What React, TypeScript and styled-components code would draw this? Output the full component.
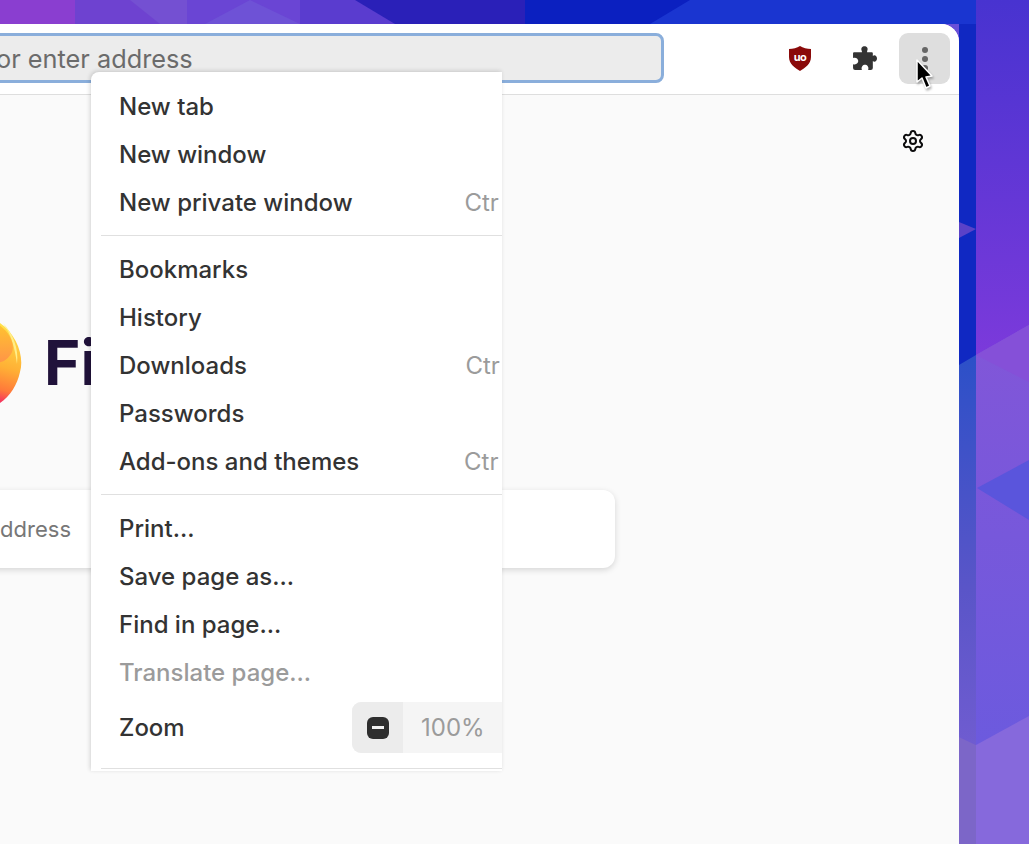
import React from "react";
import styled, { createGlobalStyle } from "styled-components";
import { Settings } from "lucide-react";

const GlobalStyle = createGlobalStyle`
  html, body {
    margin: 0;
    padding: 0;
    height: 100%;
    overflow: hidden;
    font-family: Inter, "Noto Sans", sans-serif;
  }
`;

const Desktop = styled.div`
  position: relative;
  width: 1029px;
  height: 844px;
  overflow: hidden;
  padding: 24px 70px 0 0;
  box-sizing: border-box;
  background: #6a50d8;
`;

const Wallpaper = styled.svg`
  position: absolute;
  inset: 0;
`;

const BrowserWindow = styled.div`
  position: relative;
  height: 820px;
  display: flex;
  flex-direction: column;
  background: #fafafa;
  border-radius: 0 18px 0 0;
  overflow: hidden;
`;

const Toolbar = styled.header`
  flex: none;
  height: 70px;
  display: flex;
  align-items: flex-start;
  background: #fff;
  border-bottom: 1px solid #dedede;
`;

const AddressBar = styled.div`
  flex: none;
  box-sizing: border-box;
  width: 964px;
  height: 50px;
  margin: 9px 0 0 -300px;
  padding-left: 202px;
  display: flex;
  align-items: center;
  background: #ececec;
  border: 3px solid #8aaedb;
  border-radius: 8px;
  color: #6b6b6b;
  font-size: 25.3px;
  white-space: nowrap;
`;

const ToolIcons = styled.div`
  flex: 1;
  height: 51px;
  margin-top: 9px;
  padding-right: 9px;
  display: flex;
  align-items: center;
  justify-content: flex-end;
`;

const ToolSlot = styled.div`
  width: 51px;
  height: 51px;
  margin-left: 14px;
  display: flex;
  align-items: center;
  justify-content: center;
  color: #333;
`;

const MenuButton = styled(ToolSlot)`
  margin-left: 9px;
  flex-direction: column;
  gap: 3px;
  background: #dedede;
  border-radius: 9px;
`;

const Dot = styled.span`
  width: 6px;
  height: 6px;
  border-radius: 50%;
  background: #666;
`;

const Pointer = styled.svg`
  position: absolute;
  left: 914px;
  top: 58px;
  filter: drop-shadow(1px 2px 1px rgba(0, 0, 0, 0.3));
`;

const Page = styled.main`
  flex: 1;
  display: flex;
  flex-direction: column;
`;

const GearRow = styled.div`
  display: flex;
  justify-content: flex-end;
  padding: 34px 34px 0 0;
  height: 24px;
  color: #0c0c0d;
`;

const Hero = styled.div`
  display: flex;
  align-items: center;
  height: 85px;
  margin: 167px 0 0 -63px;
  gap: 22px;
`;

const Wordmark = styled.span`
  font-size: 62px;
  font-weight: 700;
  color: #20123a;
  line-height: 1;
`;

const SearchBox = styled.div`
  box-sizing: border-box;
  width: 915px;
  height: 78px;
  margin: 85px 0 0 -300px;
  padding-right: 544px;
  display: flex;
  align-items: center;
  justify-content: flex-end;
  background: #fff;
  border-radius: 12px;
  box-shadow: 0 2px 6px rgba(0, 0, 0, 0.15);
  color: #777;
  font-size: 22px;
  white-space: nowrap;
`;

const Menu = styled.nav`
  position: absolute;
  left: 91px;
  top: 48px;
  width: 411px;
  height: 699px;
  box-sizing: border-box;
  padding: 11px 0 0;
  background: #fff;
  border-radius: 8px 0 0 0;
  box-shadow: -1px -1px 4px rgba(0, 0, 0, 0.16);
  overflow: hidden;
`;

const MenuInner = styled.div`
  width: 540px;
`;

const Row = styled.div<{ $disabled?: boolean }>`
  box-sizing: border-box;
  height: 48px;
  padding: 0 28px 2px;
  display: flex;
  align-items: center;
  justify-content: space-between;
  font-size: 24px;
  font-weight: 500;
  white-space: nowrap;
  color: ${(p) => (p.$disabled ? "#9b9b9b" : "#333")};
`;

const Shortcut = styled.span`
  font-weight: 400;
  color: #9b9b9b;
  clip-path: inset(0 calc(100% - 35px) 0 0);
`;

const Separator = styled.div`
  height: 1px;
  margin: 8px 0 10px 10px;
  background: #e0e0e0;
`;

const ZoomRow = styled(Row)`
  height: 63px;
  padding-top: 5px;
  padding-bottom: 7px;
  justify-content: flex-start;
`;

const ZoomLabel = styled.span`
  width: 233px;
`;

const ZoomControl = styled.div`
  display: flex;
  height: 51px;
  border-radius: 9px;
  overflow: hidden;
  background: #f5f5f5;
`;

const ZoomButton = styled.div`
  width: 51px;
  display: flex;
  align-items: center;
  justify-content: center;
  background: #ececec;
`;

const MinusIcon = styled.div`
  width: 22px;
  height: 22px;
  border-radius: 6px;
  background: #2e2e2e;
  display: flex;
  align-items: center;
  justify-content: center;

  &::after {
    content: "";
    width: 12px;
    height: 3px;
    background: #f0f0f0;
  }
`;

const ZoomValue = styled.div`
  padding: 0 18px;
  display: flex;
  align-items: center;
  font-weight: 400;
  color: #9b9b9b;
`;

function WallpaperArt() {
  return (
    <Wallpaper width="1029" height="844" viewBox="0 0 1029 844">
      <defs>
        <linearGradient id="right" x1="0" y1="0" x2="0" y2="1">
          <stop offset="0" stopColor="#4833d0" />
          <stop offset="1" stopColor="#7c3adb" />
        </linearGradient>
        <linearGradient id="rightLow" x1="0" y1="0" x2="0" y2="1">
          <stop offset="0" stopColor="#8256d8" />
          <stop offset="1" stopColor="#6c5ade" />
        </linearGradient>
        <linearGradient id="bandLow" x1="0" y1="0" x2="0" y2="1">
          <stop offset="0" stopColor="#2c50c8" />
          <stop offset="0.6" stopColor="#5a55c8" />
          <stop offset="1" stopColor="#6f5cd0" />
        </linearGradient>
      </defs>
      <rect x="976" width="53" height="360" fill="url(#right)" />
      <polygon points="976,355 1029,325 1029,745 976,745" fill="url(#rightLow)" />
      <polygon points="976,355 1029,382 1029,325" fill="#8550d8" />
      <polygon points="977,488 1029,460 1029,520" fill="#5a55dc" />
      <polygon points="976,745 1029,716 1029,844 976,844" fill="#8669dc" />
      <rect x="959" width="17" height="365" fill="#1028c2" />
      <polygon points="959,365 976,355 976,745 959,737" fill="url(#bandLow)" />
      <polygon points="959,737 976,745 976,844 959,844" fill="#7c66c8" />
      <polygon points="976,229 959,222 959,238" fill="#5a42c8" />
      <rect width="75" height="24" fill="#8a3ed0" />
      <rect x="75" width="112" height="24" fill="#6e42d0" />
      <polygon points="130,0 187,0 187,24 160,24" fill="#7450d2" />
      <rect x="187" width="113" height="24" fill="#6a45d4" />
      <polygon points="250,0 300,24 205,24" fill="#6e52d6" />
      <rect x="300" width="225" height="24" fill="#5a3ccf" />
      <polygon points="355,0 525,0 525,24 395,24" fill="#2a20b8" />
      <rect x="525" width="434" height="24" fill="#0b20c0" />
      <polygon points="690,0 976,0 976,24 650,24" fill="#1a35d0" />
    </Wallpaper>
  );
}

function UBlockIcon() {
  return (
    <svg width="22" height="25" viewBox="0 0 22 25">
      <path d="M11 0 C14 2 18 3 22 3 L22 11 C22 18 16 22 11 25 C6 22 0 18 0 11 L0 3 C4 3 8 2 11 0 Z" fill="#8a0a0a" />
      <text x="11" y="15" textAnchor="middle" fontSize="11" fontWeight="700" letterSpacing="-0.5" fill="#fff" fontFamily="Inter, sans-serif">
        uo
      </text>
    </svg>
  );
}

function PuzzleIcon() {
  return (
    <svg width="25" height="25" viewBox="0 0 24 24" fill="currentColor">
      <path d="M9.5 5 C8 2 10 0.3 12 0.3 C14 0.3 16 2 14.5 5 L14.5 6 L19 6 Q20 6 20 7 L20 9.5 C22 8 24 10 24 12 C24 14 22 16 20 14.5 L20 21 Q20 23 18 23 L15.5 23 C16.5 20 14.5 18 12.5 18 C10.5 18 8.5 20 9.5 23 L3 23 Q1 23 1 21 L1 17.5 C4 18.5 6 16.5 6 14.5 C6 12.5 4 10.5 1 11.5 L1 7 Q1 6 2 6 L9.5 6 Z" />
    </svg>
  );
}

function FirefoxLogo() {
  return (
    <svg width="85" height="85" viewBox="0 0 85 85">
      <defs>
        <linearGradient id="fxOuter" x1="0.9" y1="0.1" x2="0.65" y2="1">
          <stop offset="0" stopColor="#ffe14a" />
          <stop offset="0.5" stopColor="#ffb035" />
          <stop offset="0.78" stopColor="#ff7a3a" />
          <stop offset="1" stopColor="#f0146e" />
        </linearGradient>
        <linearGradient id="fxInner" x1="0.7" y1="0" x2="0.7" y2="1">
          <stop offset="0" stopColor="#ffc62e" />
          <stop offset="1" stopColor="#ff9448" />
        </linearGradient>
      </defs>
      <path d="M58 0 C78 10 88 35 83 52 C80 66 72 78 60 85 L30 85 C10 80 0 62 0 42 C0 20 30 5 58 0 Z" fill="url(#fxOuter)" />
      <path d="M66 3 C76 14 82 28 80 44 C78 28 74 14 66 3 Z" fill="#ffee8a" />
      <path d="M58 2 C74 12 79 26 74 34 C70 40 66 42 60 43 C40 45 25 30 25 10 Z" fill="url(#fxInner)" />
    </svg>
  );
}

export default function App() {
  return (
    <Desktop>
      <GlobalStyle />
      <WallpaperArt />
      <BrowserWindow>
        <Toolbar>
          <AddressBar>Search or enter address</AddressBar>
          <ToolIcons>
            <ToolSlot>
              <UBlockIcon />
            </ToolSlot>
            <ToolSlot>
              <PuzzleIcon />
            </ToolSlot>
            <MenuButton>
              <Dot />
              <Dot />
              <Dot />
            </MenuButton>
          </ToolIcons>
        </Toolbar>
        <Page>
          <GearRow>
            <Settings size={24} strokeWidth={2} />
          </GearRow>
          <Hero>
            <FirefoxLogo />
            <Wordmark>Firefox</Wordmark>
          </Hero>
          <SearchBox>Search with Google or enter address</SearchBox>
        </Page>
        <Menu>
          <MenuInner>
            <Row>New tab<Shortcut>Ctrl+T</Shortcut></Row>
            <Row>New window<Shortcut>Ctrl+N</Shortcut></Row>
            <Row>New private window<Shortcut>Ctrl+Shift+P</Shortcut></Row>
            <Separator />
            <Row>Bookmarks</Row>
            <Row>History</Row>
            <Row>Downloads<Shortcut>Ctrl+Shift+Y</Shortcut></Row>
            <Row>Passwords</Row>
            <Row>Add-ons and themes<Shortcut>Ctrl+Shift+A</Shortcut></Row>
            <Separator />
            <Row>Print...<Shortcut>Ctrl+P</Shortcut></Row>
            <Row>Save page as...<Shortcut>Ctrl+S</Shortcut></Row>
            <Row>Find in page...<Shortcut>Ctrl+F</Shortcut></Row>
            <Row $disabled>Translate page...</Row>
            <ZoomRow>
              <ZoomLabel>Zoom</ZoomLabel>
              <ZoomControl>
                <ZoomButton>
                  <MinusIcon />
                </ZoomButton>
                <ZoomValue>100%</ZoomValue>
                <ZoomButton>
                  <MinusIcon />
                </ZoomButton>
              </ZoomControl>
            </ZoomRow>
            <Separator />
          </MenuInner>
        </Menu>
      </BrowserWindow>
      <Pointer width="20" height="34" viewBox="0 0 20 34">
        <path d="M3 2 L3 24 L8 20 L12 30 L16 28 L12 19 L18 18 Z" fill="#000" stroke="#fff" strokeWidth="1.5" strokeLinejoin="round" />
      </Pointer>
    </Desktop>
  );
}
